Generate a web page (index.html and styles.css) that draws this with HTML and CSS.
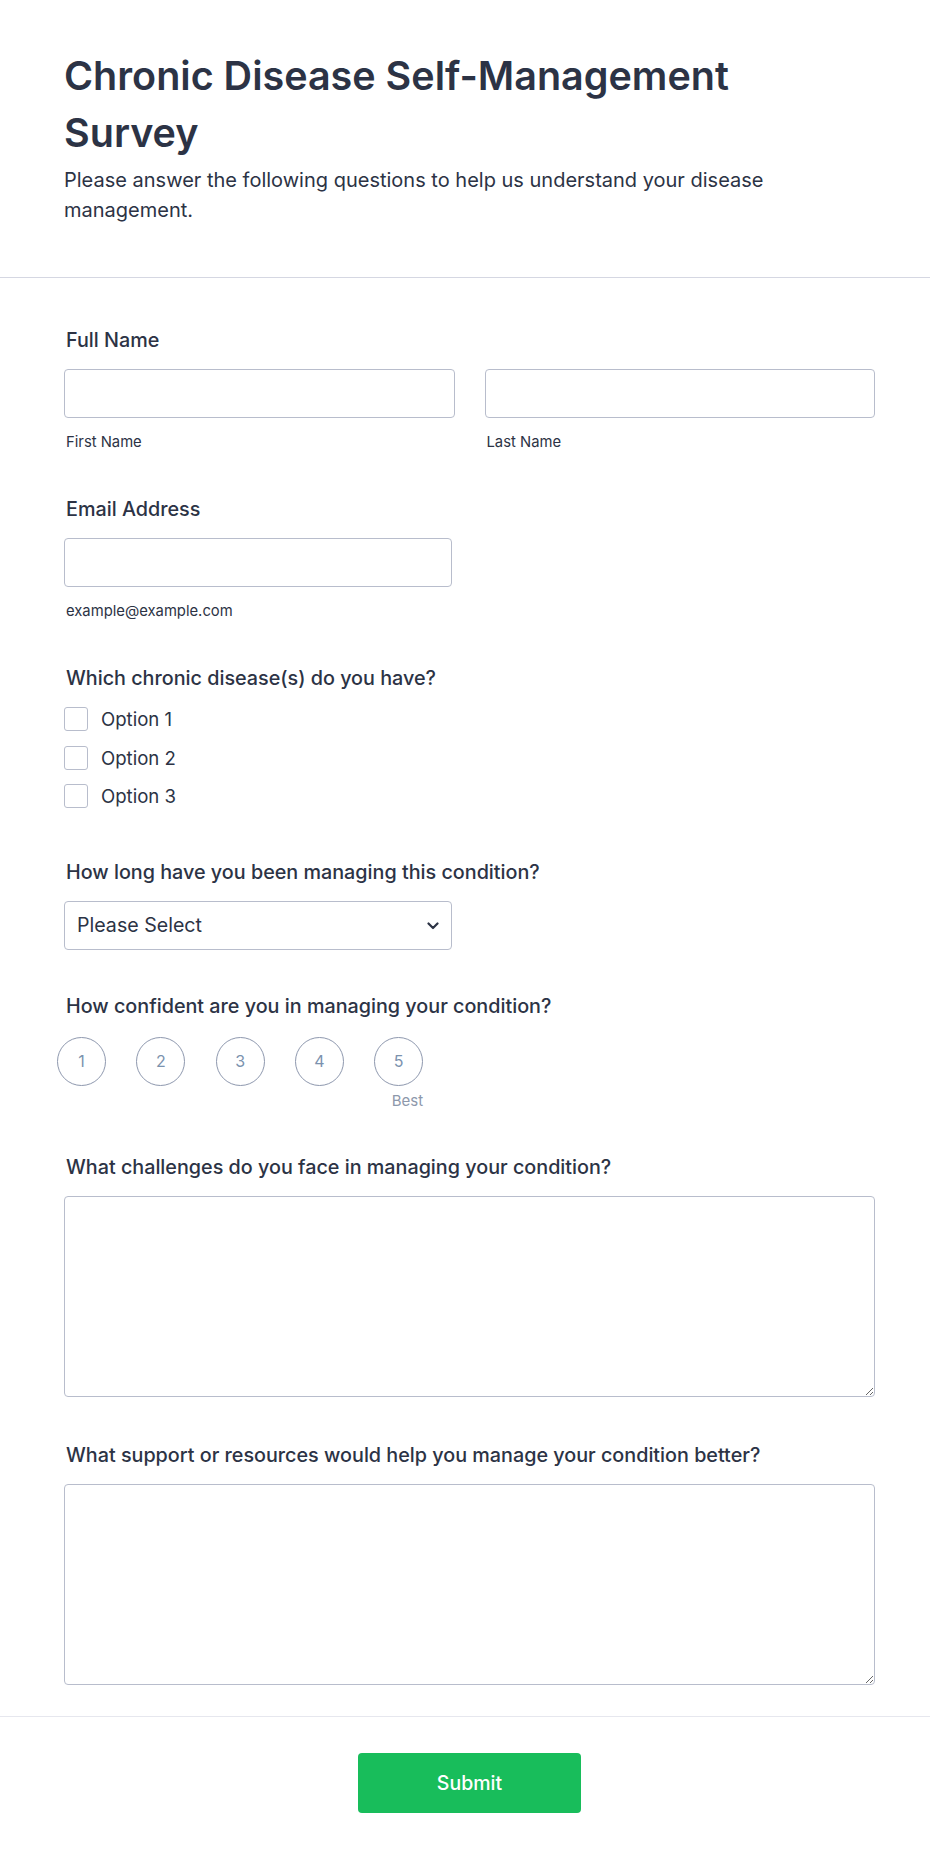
FILE: index.html
```html
<!DOCTYPE html>
<html lang="en">
<head>
<meta charset="utf-8">
<title>Chronic Disease Self-Management Survey</title>
<link rel="stylesheet" href="styles.css">
</head>
<body>
<div class="page">
  <header class="header">
    <div class="header-inner">
      <h1 class="title">Chronic Disease Self-Management Survey</h1>
      <p class="subtitle">Please answer the following questions to help us understand your disease management.</p>
    </div>
  </header>

  <form class="form">
    <div class="field">
      <label class="label">Full Name</label>
      <div class="name-row">
        <div class="name-col">
          <input class="input" type="text">
          <span class="sublabel">First Name</span>
        </div>
        <div class="name-col">
          <input class="input" type="text">
          <span class="sublabel">Last Name</span>
        </div>
      </div>
    </div>

    <div class="field">
      <label class="label">Email Address</label>
      <div class="half">
        <input class="input" type="email">
        <span class="sublabel">example@example.com</span>
      </div>
    </div>

    <div class="field">
      <label class="label">Which chronic disease(s) do you have?</label>
      <div class="options">
        <label class="option"><input class="checkbox" type="checkbox"><span>Option 1</span></label>
        <label class="option"><input class="checkbox" type="checkbox"><span>Option 2</span></label>
        <label class="option"><input class="checkbox" type="checkbox"><span>Option 3</span></label>
      </div>
    </div>

    <div class="field">
      <label class="label">How long have you been managing this condition?</label>
      <div class="half select-wrap">
        <select class="select">
          <option>Please Select</option>
        </select>
        <svg class="chevron" width="12" height="8" viewBox="0 0 12 8"><path d="M1.5 1.5 L6 6 L10.5 1.5" fill="none" stroke="#2c3345" stroke-width="2.2" stroke-linecap="round" stroke-linejoin="round"/></svg>
      </div>
    </div>

    <div class="field">
      <label class="label label-rating">How confident are you in managing your condition?</label>
      <div class="rating">
        <div class="circles">
          <span class="circle">1</span>
          <span class="circle">2</span>
          <span class="circle">3</span>
          <span class="circle">4</span>
          <span class="circle">5</span>
        </div>
        <div class="rating-caption">Best</div>
      </div>
    </div>

    <div class="field">
      <label class="label">What challenges do you face in managing your condition?</label>
      <textarea class="textarea"></textarea>
    </div>

    <div class="field field-wide-gap">
      <label class="label">What support or resources would help you manage your condition better?</label>
      <textarea class="textarea"></textarea>
    </div>
  </form>

  <footer class="footer">
    <button class="submit" type="button">Submit</button>
  </footer>
</div>
</body>
</html>
```

FILE: styles.css
```css
* { box-sizing: border-box; }

html, body {
  margin: 0;
  padding: 0;
  background: #ffffff;
}

body {
  font-family: Inter, "Noto Sans", "Liberation Sans", sans-serif;
  color: #2c3345;
}

.page {
  width: 930px;
}

.header {
  padding: 48px 55px 52.5px 64px;
  border-bottom: 1px solid #d5d7e2;
}

.header-inner {
  max-width: 760px;
}

.title {
  margin: 0;
  font-size: 39.5px;
  line-height: 57px;
  font-weight: 600;
  color: #2c3345;
}

.subtitle {
  margin: 2.5px 0 0;
  font-size: 20px;
  line-height: 30px;
  font-weight: 400;
  color: #2c3345;
}

.form {
  padding: 48px 55px 31px 64px;
  border-bottom: 1px solid #e6e7ee;
}

.field + .field {
  margin-top: 42px;
}

.field-wide-gap.field {
  margin-top: 44.5px;
}

.label {
  display: block;
  padding: 1px 0 0 2px;
  margin-bottom: 15px;
  font-size: 19.75px;
  line-height: 27px;
  font-weight: 500;
  color: #2c3345;
}

.label-rating { margin-bottom: 17px; }

.name-row {
  display: flex;
  gap: 30px;
}

.name-col {
  flex: 1;
  display: flex;
  flex-direction: column;
}

.half {
  width: 388px;
  display: flex;
  flex-direction: column;
}

.input {
  display: block;
  width: 100%;
  height: 49px;
  border: 1px solid #b8bdcc;
  border-radius: 4px;
  padding: 0 12px;
  font-family: inherit;
  font-size: 18px;
  color: #2c3345;
  background: #fff;
  outline: none;
}

.sublabel {
  display: block;
  margin-top: 13px;
  padding-left: 2px;
  font-size: 14.8px;
  line-height: 22px;
  color: #2c3345;
}

.options {
  display: flex;
  flex-direction: column;
  gap: 14.5px;
  padding-bottom: 7.5px;
}

.option {
  display: flex;
  align-items: center;
  gap: 13px;
  height: 24px;
  font-size: 18.6px;
  line-height: 24px;
  color: #2c3345;
}

.checkbox {
  appearance: none;
  -webkit-appearance: none;
  margin: 0;
  width: 24px;
  height: 24px;
  border: 1px solid #b8bdcc;
  border-radius: 3px;
  background: #fff;
  flex: none;
}

.select-wrap {
  position: relative;
}

.select {
  appearance: none;
  -webkit-appearance: none;
  display: block;
  width: 100%;
  height: 49px;
  border: 1px solid #b8bdcc;
  border-radius: 4px;
  padding: 0 40px 0 12px;
  font-family: inherit;
  font-size: 19.6px;
  color: #2c3345;
  background: #fff;
  outline: none;
}

.chevron {
  position: absolute;
  right: 13px;
  top: 21px;
  pointer-events: none;
}

.rating {
  display: inline-flex;
  flex-direction: column;
  align-items: flex-end;
  margin-left: -7px;
}

.circles {
  display: flex;
  gap: 30.3px;
}

.circle {
  width: 49px;
  height: 49px;
  border: 1px solid #8e98ae;
  border-radius: 50%;
  display: flex;
  align-items: center;
  justify-content: center;
  font-size: 16px;
  color: #7b92ae;
}

.rating-caption {
  margin-top: 4px;
  font-size: 15px;
  line-height: 21px;
  color: #8d98ab;
}

.textarea {
  display: block;
  width: 100%;
  height: 201px;
  border: 1px solid #b8bdcc;
  border-radius: 4px;
  padding: 12px;
  font-family: inherit;
  font-size: 18px;
  color: #2c3345;
  background: #fff;
  resize: vertical;
  outline: none;
}

.footer {
  padding: 36.3px 55px 48.7px 64px;
  display: flex;
  justify-content: center;
}

.submit {
  width: 223px;
  height: 60px;
  border: none;
  border-radius: 4px;
  background: #18bd5b;
  color: #ffffff;
  font-family: inherit;
  font-size: 19.5px;
  font-weight: 500;
}
```
